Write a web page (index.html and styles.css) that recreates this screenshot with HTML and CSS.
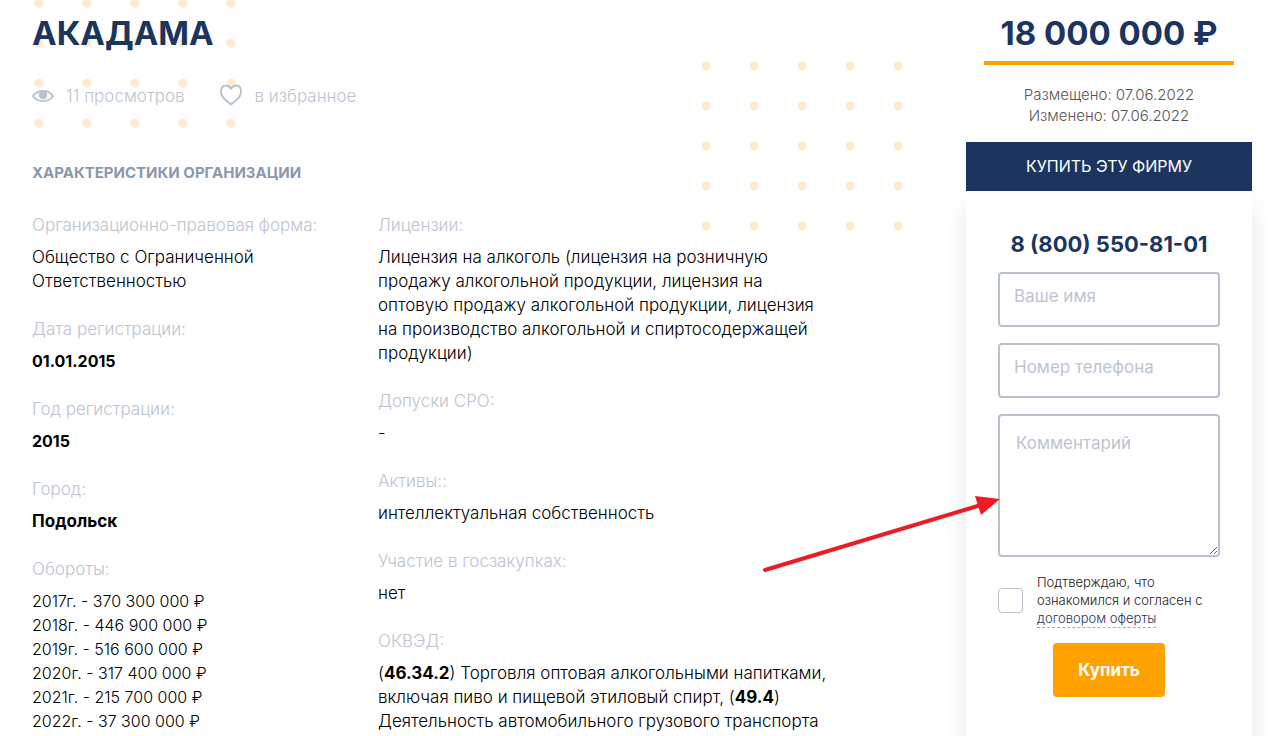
FILE: index.html
```html
<!DOCTYPE html>
<html lang="ru">
  <head>
    <meta charset="utf-8">
    <title>АКАДАМА</title>
    <meta name="viewport" content="width=device-width, initial-scale=1">
    <link rel="stylesheet" href="styles.css">
  </head>
  <body>
    <div class="page">
      <main class="company">
        <div class="dots dots-left"></div>
        <div class="dots dots-right"></div>

        <h1>АКАДАМА</h1>
        <div class="meta">
          <span class="meta-item views">
            <svg width="22" height="14" viewBox="0 0 22 14">
              <path d="M1 7C5.500 .3 16.500 .3 21 7C16.500 13.700 5.500 13.700 1 7Z" fill="none" stroke="#b8c1ce" stroke-width="1.800" stroke-linejoin="round"/>
              <circle cx="11" cy="6" r="4.200" fill="#b8c1ce"/>
            </svg>
            11 просмотров
          </span>
          <a class="meta-item favorite" href="#">
            <svg width="24" height="24" viewBox="0 0 24 24">
              <path d="M12 20.500C10 18.500 8 17.300 5.500 15C2.800 12.500 2 10 2 7C2 3.700 4 1.500 6.700 1.500C9 1.500 10.700 2.700 12 4.800C13.300 2.700 15 1.500 17.300 1.500C20 1.500 22 3.700 22 7C22 10 21.200 12.500 18.500 15C16 17.300 14 18.500 12 20.500Z" fill="none" stroke="#b8c1ce" stroke-width="2" stroke-linejoin="round"/>
            </svg>
            в избранное
          </a>
        </div>

        <h2>Характеристики организации</h2>
        <div class="details">
          <dl>
            <dt>Организационно-правовая форма:</dt>
            <dd>Общество с Ограниченной Ответственностью</dd>
            <dt>Дата регистрации:</dt>
            <dd class="numbers"><b>01.01.2015</b></dd>
            <dt>Год регистрации:</dt>
            <dd class="numbers"><b>2015</b></dd>
            <dt>Город:</dt>
            <dd><b>Подольск</b></dd>
            <dt>Обороты:</dt>
            <dd class="numbers">
              2017г. - 370 300 000 ₽<br>
              2018г. - 446 900 000 ₽<br>
              2019г. - 516 600 000 ₽<br>
              2020г. - 317 400 000 ₽<br>
              2021г. - 215 700 000 ₽<br>
              2022г. - 37 300 000 ₽
            </dd>
          </dl>
          <dl>
            <dt>Лицензии:</dt>
            <dd>Лицензия на алкоголь (лицензия на розничную<br> продажу алкогольной продукции, лицензия на<br> оптовую продажу алкогольной продукции, лицензия<br> на производство алкогольной и спиртосодержащей<br> продукции)</dd>
            <dt>Допуски СРО:</dt>
            <dd>-</dd>
            <dt>Активы::</dt>
            <dd>интеллектуальная собственность</dd>
            <dt>Участие в госзакупках:</dt>
            <dd>нет</dd>
            <dt>ОКВЭД:</dt>
            <dd>(<b>46.34.2</b>) Торговля оптовая алкогольными напитками,<br> включая пиво и пищевой этиловый спирт, (<b>49.4</b>)<br> Деятельность автомобильного грузового транспорта</dd>
          </dl>
        </div>
      </main>

      <aside class="sidebar">
        <div class="price">18 000 000 ₽</div>
        <p class="dates">Размещено: 07.06.2022<br>Изменено: 07.06.2022</p>
        <div class="card-title">Купить эту фирму</div>
        <form class="card">
          <a class="phone" href="tel:88005508101">8 (800) 550-81-01</a>
          <input class="field" type="text" name="name" placeholder="Ваше имя" aria-label="Ваше имя">
          <input class="field" type="tel" name="phone" placeholder="Номер телефона" aria-label="Номер телефона">
          <textarea class="field comment" name="comment" placeholder="Комментарий" aria-label="Комментарий"></textarea>
          <div class="agree">
            <input id="agree" type="checkbox" name="agree">
            <label for="agree">Подтверждаю, что ознакомился и согласен с <a href="#">договором оферты</a></label>
          </div>
          <button class="buy" type="submit">Купить</button>
        </form>
        <svg class="arrow" width="240" height="80" viewBox="0 0 240 80">
          <path d="M4 76L220 11" stroke="#ed1c24" stroke-width="4" stroke-linecap="round"/>
          <path d="M239 5L214 2L220 21Z" fill="#ed1c24"/>
        </svg>
      </aside>
    </div>
  </body>
</html>
```
FILE: styles.css
```css
* {
  box-sizing: border-box;
}

body {
  margin: 0;
  font-family: Inter, "Open Sans", sans-serif;
  font-size: 17px;
  font-weight: 300;
  line-height: 24px;
  color: #000;
  background-color: #fff;
}

h1, h2, p, dl, dd {
  margin: 0;
}

b {
  font-weight: 700;
}

.page {
  display: flex;
  gap: 32px;
  height: 100vh;
  padding: 13px 19px 0 32px;
  overflow: hidden;
}

.company {
  position: relative;
  flex: 1;
  min-width: 0;
}

/* decorative dots behind the header */
.dots {
  position: absolute;
  z-index: -1;
  width: 240px;
  background-image: radial-gradient(circle, #ffebcc 4px, transparent 5px);
  background-size: 48px 40px;
}

.dots-left {
  top: -30px;
  left: -17px;
  height: 160px;
}

.dots-right {
  top: 33px;
  right: 12px;
  height: 200px;
}

h1, .price {
  font-size: 33px;
  font-weight: 700;
  line-height: 40px;
  color: #1b355e;
}

.meta {
  display: flex;
  gap: 34px;
  margin-top: 31px;
}

.meta-item {
  display: flex;
  align-items: center;
  gap: 12px;
  color: #bdc3d1;
  text-decoration: none;
}

h2 {
  margin-top: 53px;
  font-size: 15px;
  font-weight: 700;
  line-height: 24px;
  text-transform: uppercase;
  color: #8998ae;
}

.details {
  display: grid;
  grid-template-columns: 314px 1fr;
  gap: 32px;
  margin-top: 28px;
}

dt {
  margin-bottom: 8px;
  color: #bdc3d1;
}

dd {
  margin-bottom: 24px;
}

.numbers {
  font-size: 16px;
}

.sidebar {
  position: relative;
  display: flex;
  flex-direction: column;
  width: 286px;
}

.price {
  margin: 0 18px;
  padding-bottom: 8px;
  border-bottom: 4px solid #ffa200;
  text-align: center;
}

.dates {
  margin: 19px 0 16px;
  font-size: 15px;
  line-height: 21px;
  text-align: center;
  color: #555;
}

.card-title {
  font-size: 16px;
  font-weight: 400;
  line-height: 49px;
  text-align: center;
  text-transform: uppercase;
  color: #fff;
  background-color: #1b355e;
}

.card {
  display: flex;
  flex: 1;
  flex-direction: column;
  padding: 40px 32px;
  box-shadow: 0 16px 24px rgba(0, 0, 0, 0.1);
}

.phone {
  margin-bottom: 15px;
  font-size: 22px;
  font-weight: 700;
  line-height: 26px;
  text-align: center;
  text-decoration: none;
  color: #1b355e;
}

.field {
  width: 100%;
  height: 55px;
  margin-bottom: 16px;
  padding: 0 14px 8px;
  border: 2px solid #b8c1ce;
  border-radius: 4px;
  font-family: Inter, "Open Sans", sans-serif;
  font-size: 17px;
  font-weight: 400;
  background-color: #fff;
}

.field::placeholder {
  color: #bdc3d1;
}

.comment {
  height: 143px;
  padding: 15px 16px;
  line-height: 24px;
}

.agree {
  display: flex;
  align-items: center;
  gap: 14px;
  font-size: 13px;
  line-height: 18px;
  color: #222;
}

.agree input {
  flex: none;
  appearance: none;
  width: 25px;
  height: 25px;
  margin: 0;
  border: 1px solid #b8c1ce;
  border-radius: 4px;
}

.agree a {
  padding-bottom: 1px;
  border-bottom: 1px dashed #ffa200;
  text-decoration: none;
  color: #1b355e;
}

.buy {
  align-self: center;
  height: 54px;
  margin-top: 16px;
  padding: 0 25px;
  border: none;
  border-radius: 4px;
  font-family: Inter, "Open Sans", sans-serif;
  font-size: 17px;
  font-weight: 700;
  color: #fff;
  background-color: #ffa200;
  cursor: pointer;
}

/* pointer to the comment field */
.arrow {
  position: absolute;
  top: 481px;
  left: -205px;
  pointer-events: none;
}
```
